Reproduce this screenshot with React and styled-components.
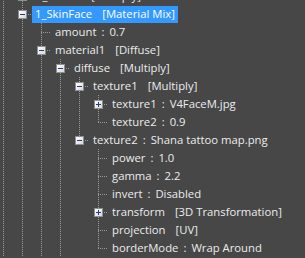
import React from "react";
import styled, { createGlobalStyle } from "styled-components";

const GlobalStyle = createGlobalStyle`
  html, body {
    margin: 0;
    background: #474747;
    overflow: hidden;
  }
`;

const nodes = [
  { level: 1, kind: "plus", name: "0_Stroke", type: "Multiply", next: true, guides: [1] },
  { level: 1, kind: "minus", name: "1_SkinFace", type: "Material Mix", next: true, guides: [1], selected: true },
  { level: 2, name: "amount", value: "0.7", next: true, guides: [1, 1] },
  { level: 2, kind: "minus", name: "material1", type: "Diffuse", next: true, guides: [1, 1] },
  { level: 3, kind: "minus", name: "diffuse", type: "Multiply", next: true, guides: [1, 1, 1] },
  { level: 4, kind: "minus", name: "texture1", type: "Multiply", next: true, guides: [1, 1, 1, 1] },
  { level: 5, kind: "plus", name: "texture1", value: "V4FaceM.jpg", next: true, guides: [1, 1, 1, 1, 1] },
  { level: 5, name: "texture2", value: "0.9", next: false, guides: [1, 1, 1, 1, 1] },
  { level: 4, kind: "minus", name: "texture2", value: "Shana tattoo map.png", next: false, guides: [1, 1, 1, 1] },
  { level: 5, name: "power", value: "1.0", next: true, guides: [1, 1, 1, 1, 0] },
  { level: 5, name: "gamma", value: "2.2", next: true, guides: [1, 1, 1, 1, 0] },
  { level: 5, name: "invert", value: "Disabled", next: true, guides: [1, 1, 1, 1, 0] },
  { level: 5, kind: "plus", name: "transform", type: "3D Transformation", next: true, guides: [1, 1, 1, 1, 0] },
  { level: 5, name: "projection", type: "UV", next: true, guides: [1, 1, 1, 1, 0] },
  { level: 5, name: "borderMode", value: "Wrap Around", next: false, guides: [1, 1, 1, 1, 0] },
];

const dots = "repeating-linear-gradient(to bottom, #9a9a9a 0 1px, transparent 1px 2px)";
const hdots = "repeating-linear-gradient(to right, #9a9a9a 0 1px, transparent 1px 2px)";

const Tree = styled.div`
  margin: -13px 0 0 -6px;
  font-family: "Open Sans", "Noto Sans", sans-serif;
  font-size: 11.3px;
  color: #ececec;
`;

const Row = styled.div`
  display: flex;
  align-items: center;
  height: 18px;
  white-space: nowrap;
`;

const Guide = styled.div`
  flex: 0 0 19px;
  height: 100%;
  background: ${(p) => (p.$on ? dots : "none")};
  background-size: 1px 100%;
  background-position: 9px 0;
  background-repeat: no-repeat;
`;

const Connector = styled.div`
  flex: 0 0 19px;
  height: 100%;
  display: flex;
  align-items: center;
  background-image: ${dots}, ${hdots};
  background-size: 1px ${(p) => (p.$next ? "100%" : "10px")}, 10px 1px;
  background-position: 9px 0, 9px 9px;
  background-repeat: no-repeat;
`;

const Toggle = styled.div`
  box-sizing: border-box;
  width: 9px;
  height: 9px;
  margin: 1px 0 0 5px;
  border: 1px solid #8f8f8f;
  background: linear-gradient(to bottom right, #ffffff, #d8d8d8);
  display: flex;
  align-items: center;
  justify-content: center;
  position: relative;

  &::before {
    content: "";
    width: 5px;
    height: 1px;
    background: #1e3f8f;
  }
  &::after {
    content: "";
    display: ${(p) => (p.$plus ? "block" : "none")};
    position: absolute;
    left: 3px;
    top: 1px;
    width: 1px;
    height: 5px;
    background: #1e3f8f;
  }
`;

const Label = styled.div`
  height: 17px;
  line-height: 16px;
  padding: 0 3px 1px;
  box-sizing: border-box;
  margin-left: ${(p) => (p.$selected ? "0" : "1px")};
  background: ${(p) => (p.$selected ? "#3399ff" : "transparent")};
  color: ${(p) => (p.$selected ? "#ffffff" : "#ececec")};
`;

const Colon = styled.span`
  margin: 0 5px;
`;

const Type = styled.span`
  margin-left: 10px;
`;

const App = () => (
  <>
    <GlobalStyle />
    <Tree>
      {nodes.map((n, i) => (
        <Row key={i}>
          {n.guides.map((g, j) => (
            <Guide key={j} $on={!!g} />
          ))}
          <Connector $next={n.next}>
            {n.kind && <Toggle $plus={n.kind === "plus"} />}
          </Connector>
          <Label $selected={n.selected}>
            {n.name}
            {n.value && (
              <>
                <Colon>:</Colon>
                {n.value}
              </>
            )}
            {n.type && <Type>[{n.type}]</Type>}
          </Label>
        </Row>
      ))}
    </Tree>
  </>
);

export default App;
